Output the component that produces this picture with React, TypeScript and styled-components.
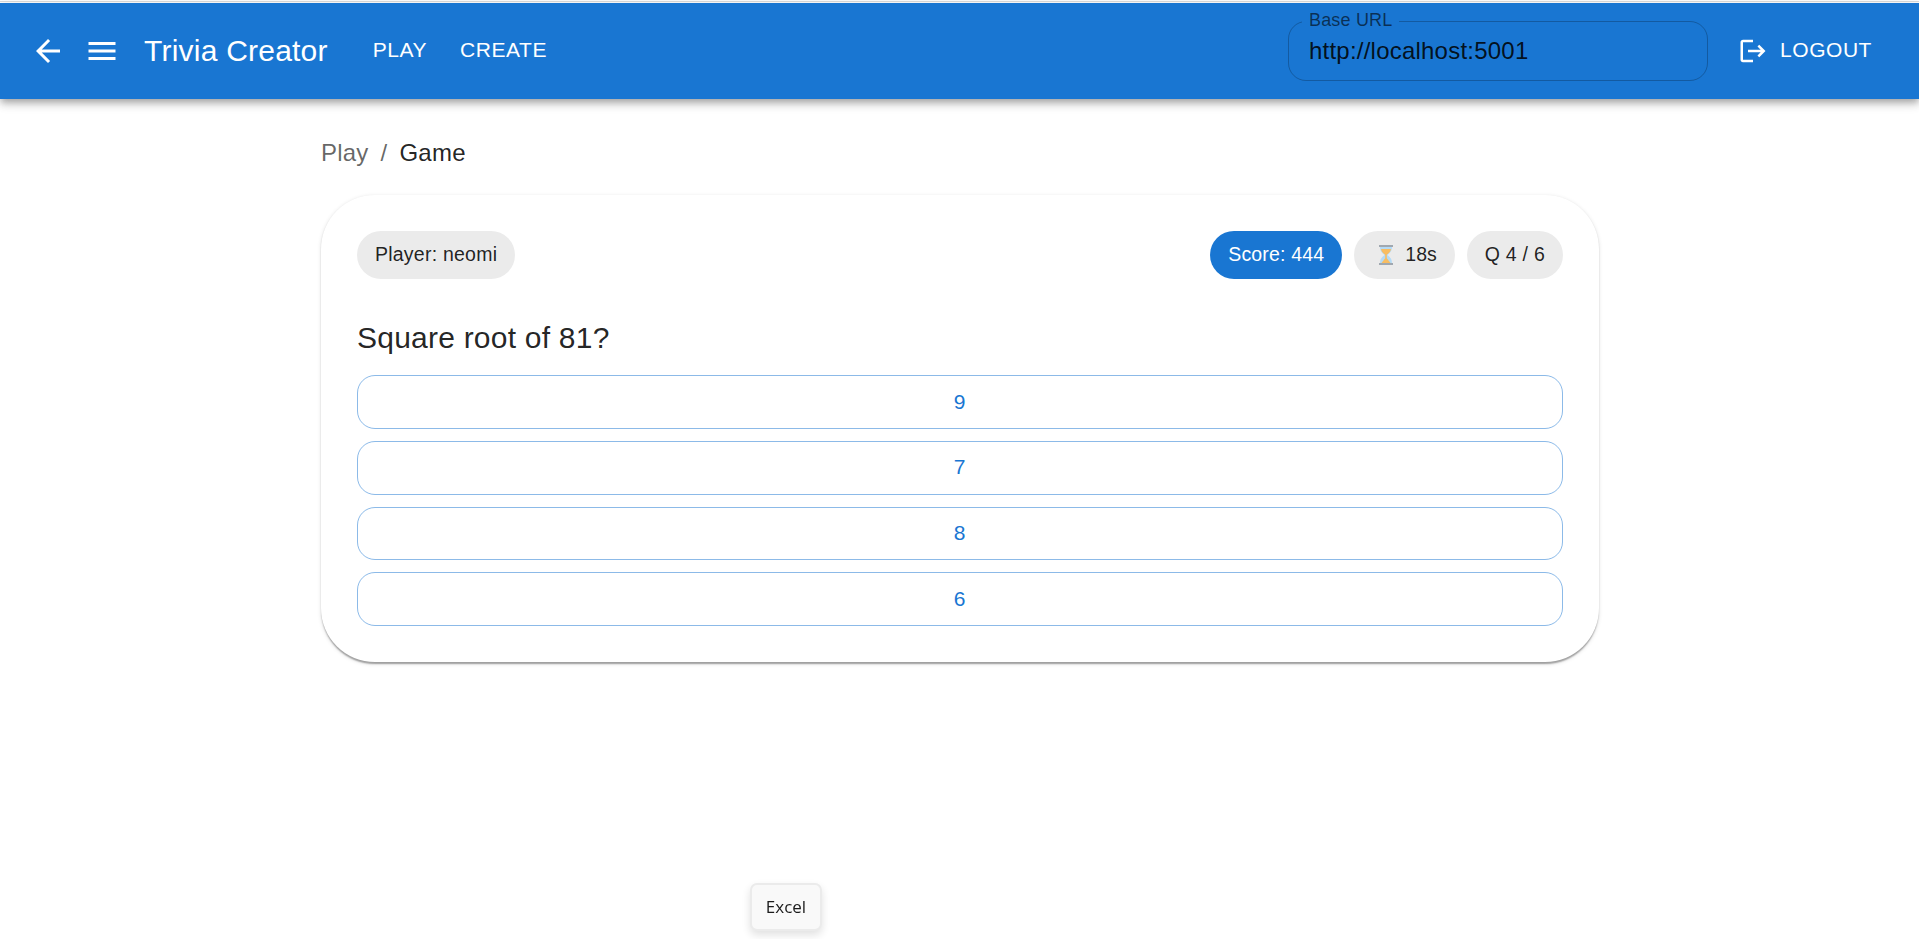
import React from 'react';
import styled, { createGlobalStyle } from 'styled-components';

const GlobalStyle = createGlobalStyle`
  *, *::before, *::after { box-sizing: border-box; }
  body {
    margin: 0;
    background: #fff;
    color: rgba(0, 0, 0, 0.87);
    font-family: "Liberation Sans", Arial, Helvetica, sans-serif;
    font-size: 24px;
    line-height: 1.5;
    overflow: hidden;
  }
  button, input { font-family: inherit; }
`;

const Page = styled.div`
  display: flex;
  flex-direction: column;
  min-height: 939px;
`;

const TopEdge = styled.div`
  height: 3px;
  background: linear-gradient(#fff 1px, #dcdcdc 1px, #dcdcdc 2px, #fff 2px);
`;

const AppBar = styled.header`
  display: flex;
  align-items: center;
  height: 96px;
  padding: 0 35px 0 18px;
  background: #1976d2;
  color: #fff;
  box-shadow: 0 3px 6px -1.5px rgba(0, 0, 0, 0.2), 0 6px 7.5px rgba(0, 0, 0, 0.14),
    0 1.5px 15px rgba(0, 0, 0, 0.12);
`;

const IconButton = styled.button<{ $pull?: number }>`
  display: flex;
  padding: 12px;
  margin-left: ${({ $pull = 0 }) => -$pull}px;
  border: 0;
  background: none;
  color: inherit;
`;

const Icon = styled.svg<{ $size: number }>`
  display: block;
  flex: none;
  width: ${({ $size }) => $size}px;
  height: ${({ $size }) => $size}px;
  fill: currentColor;
`;

const LogoutIcon = styled(Icon)`
  margin-left: -6px;
`;

const Brand = styled.h1`
  margin: 0 33px 1px 12px;
  font-size: 30px;
  font-weight: 400;
  line-height: 48px;
  letter-spacing: 0.225px;
`;

const Nav = styled.nav`
  display: flex;
  gap: 9px;
  flex: 1;
`;

const TextButton = styled.button`
  display: flex;
  align-items: center;
  gap: 12px;
  padding: 9px 12px;
  border: 0;
  background: none;
  color: inherit;
  font-size: 21px;
  line-height: 1.75;
  letter-spacing: 0.55px;
  text-transform: uppercase;
`;

const ButtonLabel = styled.span`
  padding-bottom: 1px;
`;

const Field = styled.fieldset`
  width: 420px;
  height: 69px;
  margin: -9px 24px 0 0;
  padding: 0 20px 0 13px;
  border: 1px solid rgba(0, 0, 0, 0.23);
  border-radius: 18px;
`;

const FieldLabel = styled.legend`
  height: 18px;
  padding: 0 7px;
  color: rgba(0, 0, 0, 0.6);
  font-size: 18px;
  line-height: 16px;
  letter-spacing: 0.17px;
`;

const FieldInput = styled.input`
  display: block;
  width: 100%;
  height: 36px;
  margin-top: 3px;
  padding: 0 0 0 7px;
  border: 0;
  outline: 0;
  background: none;
  color: rgba(0, 0, 0, 0.87);
  font-size: 24px;
  letter-spacing: 0.22px;
`;

const Container = styled.main`
  width: 1350px;
  margin: 0 0 0 285px;
  padding: 36px 36px 0;
`;

const Breadcrumbs = styled.nav`
  display: flex;
  height: 36px;
  margin-bottom: 24px;
  color: rgba(0, 0, 0, 0.6);
  letter-spacing: 0.22px;
`;

const Separator = styled.span`
  margin: 0 12px;
`;

const Current = styled.span`
  color: rgba(0, 0, 0, 0.87);
`;

const Card = styled.section`
  padding: 36px;
  border-radius: 54px;
  background: #fff;
  box-shadow: 0 3px 1.5px -1.5px rgba(0, 0, 0, 0.2), 0 1.5px 1.5px rgba(0, 0, 0, 0.14),
    0 1.5px 4.5px rgba(0, 0, 0, 0.12);
`;

const StatusRow = styled.div`
  display: flex;
  justify-content: space-between;
`;

const ChipGroup = styled.div`
  display: flex;
  gap: 12px;
`;

const Chip = styled.span<{ $primary?: boolean; $tracking?: number }>`
  display: inline-flex;
  align-items: center;
  height: 48px;
  padding: 0 18px 1px;
  border-radius: 24px;
  background: ${({ $primary }) => ($primary ? '#1976d2' : '#ebebeb')};
  color: ${({ $primary }) => ($primary ? '#fff' : 'rgba(0, 0, 0, 0.87)')};
  font-size: 19.5px;
  letter-spacing: ${({ $tracking = 0 }) => $tracking}px;
  white-space: pre;
`;

const Hourglass = styled.svg`
  width: 16px;
  height: 20px;
  margin: 0 11px 0 6px;
`;

const Question = styled.h2`
  margin: 35px 0 13px;
  font-size: 30px;
  font-weight: 400;
  line-height: 48px;
  letter-spacing: 0.225px;
`;

const Options = styled.div`
  display: flex;
  flex-direction: column;
  gap: 12px;
`;

const Option = styled.button`
  height: 53.75px;
  padding: 7.5px 22.5px;
  border: 1px solid rgba(25, 118, 210, 0.5);
  border-radius: 18px;
  background: none;
  color: #1976d2;
  font-size: 21px;
  line-height: 1.75;
  letter-spacing: 0.6px;
`;

const TaskbarTip = styled.div`
  position: fixed;
  left: 750px;
  top: 883px;
  display: flex;
  align-items: center;
  justify-content: center;
  width: 72px;
  height: 48px;
  padding-bottom: 1px;
  border: 2px solid #ebebeb;
  border-radius: 7px;
  background: #f9f9f9;
  box-shadow: 0 4px 8px rgba(0, 0, 0, 0.12);
  color: #1b1b1b;
  font: 17px/24px "Open Sans", "Noto Sans", sans-serif;
`;

const answers = ['9', '7', '8', '6'];

export default function App() {
  return (
    <Page>
      <GlobalStyle />
      <TopEdge />
      <AppBar>
        <IconButton aria-label="Back">
          <Icon $size={36} viewBox="0 0 24 24">
            <path d="M20 11H7.83l5.59-5.59L12 4l-8 8 8 8 1.41-1.41L7.83 13H20z" />
          </Icon>
        </IconButton>
        <IconButton $pull={6} aria-label="Menu">
          <Icon $size={36} viewBox="0 0 24 24">
            <path d="M3 18h18v-2H3zm0-5h18v-2H3zm0-7v2h18V6z" />
          </Icon>
        </IconButton>
        <Brand>Trivia Creator</Brand>
        <Nav>
          <TextButton>
            <ButtonLabel>Play</ButtonLabel>
          </TextButton>
          <TextButton>
            <ButtonLabel>Create</ButtonLabel>
          </TextButton>
        </Nav>
        <Field>
          <FieldLabel>Base URL</FieldLabel>
          <FieldInput defaultValue="http://localhost:5001" aria-label="Base URL" />
        </Field>
        <TextButton>
          <LogoutIcon $size={30} viewBox="0 0 24 24">
            <path d="m17 7-1.41 1.41L18.17 11H8v2h10.17l-2.58 2.58L17 17l5-5zM4 5h8V3H4c-1.1 0-2 .9-2 2v14c0 1.1.9 2 2 2h8v-2H4z" />
          </LogoutIcon>
          <ButtonLabel>Logout</ButtonLabel>
        </TextButton>
      </AppBar>
      <Container>
        <Breadcrumbs>
          <span>Play</span>
          <Separator>/</Separator>
          <Current>Game</Current>
        </Breadcrumbs>
        <Card>
          <StatusRow>
            <Chip $tracking={0.23}>Player: neomi</Chip>
            <ChipGroup>
              <Chip $primary $tracking={0.18}>Score: 444</Chip>
              <Chip>
                <Hourglass viewBox="0 0 16 20">
                  <path d="M2 1h12c0 5-1.500 6.500-4.500 9 3 2.500 4.500 4 4.500 9H2c0-5 1.500-6.500 4.500-9C3.500 7.500 2 6 2 1z" fill="#b4dbf7" />
                  <path d="M3 4h10c-.3 2.800-2 4-4.200 5.800v3.400L12.500 18h-9l3.700-4.800V9.800C5 8 3.300 6.800 3 4z" fill="#f8bd62" />
                  <path d="M1 0h14v2H1zM1 18h14v2H1z" fill="#a0a8b0" />
                </Hourglass>
                18s
              </Chip>
              <Chip $tracking={0.24}>Q 4 / 6</Chip>
            </ChipGroup>
          </StatusRow>
          <Question>Square root of 81?</Question>
          <Options>
            {answers.map((answer) => (
              <Option key={answer}>{answer}</Option>
            ))}
          </Options>
        </Card>
      </Container>
      <TaskbarTip>Excel</TaskbarTip>
    </Page>
  );
}
